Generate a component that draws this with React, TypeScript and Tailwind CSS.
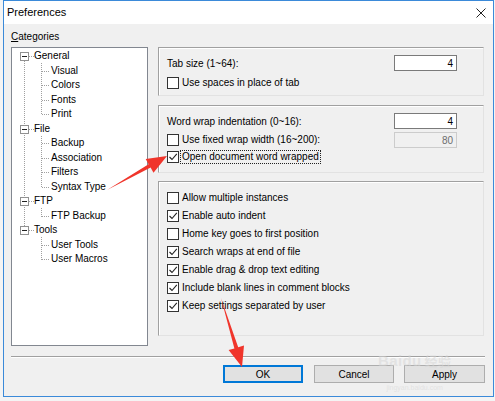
import React from 'react';

type TreeItem = { label: string; level: 0 | 1 };

const treeItems: TreeItem[] = [
  { label: 'General', level: 0 },
  { label: 'Visual', level: 1 },
  { label: 'Colors', level: 1 },
  { label: 'Fonts', level: 1 },
  { label: 'Print', level: 1 },
  { label: 'File', level: 0 },
  { label: 'Backup', level: 1 },
  { label: 'Association', level: 1 },
  { label: 'Filters', level: 1 },
  { label: 'Syntax Type', level: 1 },
  { label: 'FTP', level: 0 },
  { label: 'FTP Backup', level: 1 },
  { label: 'Tools', level: 0 },
  { label: 'User Tools', level: 1 },
  { label: 'User Macros', level: 1 },
];

const ROW = 14.5;
const rowCenter = (i: number) => Math.round(1 + ROW * i + ROW / 2);

// connector lines + expander boxes for the category tree
const TreeLines: React.FC = () => {
  const roots = treeItems.map((t, i) => (t.level === 0 ? i : -1)).filter((i) => i >= 0);
  const groups = roots.map((r, k) => {
    const end = k + 1 < roots.length ? roots[k + 1] : treeItems.length;
    const kids: number[] = [];
    for (let i = r + 1; i < end; i++) kids.push(i);
    return { r, kids };
  });
  return (
    <svg className="absolute left-0 top-0" width={135} height={297} shapeRendering="crispEdges">
      <g stroke="#a0a0a0" strokeDasharray="1 1" strokeWidth={1}>
        <line x1={12.5} y1={rowCenter(roots[0]) + 5} x2={12.5} y2={rowCenter(roots[roots.length - 1]) - 4} />
        {groups.map(({ r, kids }) => (
          <g key={r}>
            <line x1={17} y1={rowCenter(r) + 0.5} x2={22} y2={rowCenter(r) + 0.5} />
            {kids.length > 0 && (
              <line x1={29.5} y1={rowCenter(r) + 7} x2={29.5} y2={rowCenter(kids[kids.length - 1]) + 0.5} />
            )}
            {kids.map((c) => (
              <line key={c} x1={30} y1={rowCenter(c) + 0.5} x2={37} y2={rowCenter(c) + 0.5} />
            ))}
          </g>
        ))}
      </g>
      {roots.map((r) => (
        <g key={r}>
          <rect x={8.5} y={rowCenter(r) - 3.5} width={8} height={8} fill="#fff" stroke="#919191" />
          <rect x={10} y={rowCenter(r)} width={5} height={1} fill="#222" />
        </g>
      ))}
    </svg>
  );
};

const Check: React.FC<{ checked?: boolean }> = ({ checked }) => (
  <span className="w-[12px] h-[12px] border border-[#333] bg-white flex items-center justify-center shrink-0">
    {checked && (
      <svg width="10" height="10" viewBox="0 0 10 10">
        <polyline points="1.5,5 4,7.5 8.8,1.8" fill="none" stroke="#222" strokeWidth="1.1" />
      </svg>
    )}
  </span>
);

const CheckRow: React.FC<{ label: string; checked?: boolean; focused?: boolean; className?: string }> = ({
  label,
  checked,
  focused,
  className = '',
}) => (
  <div className={`flex items-center ${className}`}>
    <Check checked={checked} />
    <span
      className={`ml-[2px] px-[1px] leading-[12px] ${focused ? 'outline outline-1 outline-dotted outline-[#222]' : ''}`}
    >
      {label}
    </span>
  </div>
);

const NumBox: React.FC<{ value: string; disabled?: boolean }> = ({ value, disabled }) => (
  <div
    className={`w-[63px] h-[16px] flex items-center justify-end pr-[3px] ${
      disabled ? 'bg-[#f0f0f0] border border-[#cccccc] text-[#6d6d6d]' : 'bg-white border border-[#7a7a7a] text-black'
    }`}
  >
    {value}
  </div>
);

const GroupBox: React.FC<{ className?: string; children: React.ReactNode }> = ({ className = '', children }) => (
  <div
    className={`border-t border-l border-t-[#a0a0a0] border-l-[#a0a0a0] border-r border-b border-r-[#e2e2e2] border-b-[#e2e2e2] shadow-[inset_1px_1px_0_#ffffff] pl-[8px] pr-[26px] pt-[7px] ${className}`}
  >
    {children}
  </div>
);

const Button: React.FC<{ label: string; primary?: boolean; className?: string }> = ({ label, primary, className = '' }) => (
  <button
    className={`h-[18px] flex items-center justify-center bg-[#e1e1e1] text-black ${
      primary ? 'border-2 border-[#0078d7]' : 'border border-[#adadad]'
    } ${className}`}
  >
    {label}
  </button>
);

const Arrows: React.FC = () => (
  <svg className="absolute left-0 top-0 pointer-events-none" width={495} height={401}>
    <polygon
      points="107,190 150.6,167.6 153.5,172.8 167,156 145.7,158.9 148.6,164.2"
      fill="#f0352b"
    />
    <polygon
      points="221,298 238.2,347.2 244,345.5 242,367 228.6,350.1 234.4,348.4"
      fill="#f0352b"
    />
  </svg>
);

export default function App() {
  return (
    <div className="relative w-[495px] h-[401px] bg-[#f4f4f4] font-['Liberation_Sans',Arial,sans-serif] text-[10px] text-black">
      <div className="ml-[3px] w-[491px] h-[397px] border border-[#3b8ad9] bg-[#f0f0f0] flex flex-col">
        {/* title bar */}
        <div className="h-[23px] bg-white flex items-center justify-between pl-[3px] pr-[7px] shrink-0">
          <span className="text-[11px] leading-none">Preferences</span>
          <svg width="10" height="10" viewBox="0 0 10 10">
            <path d="M0.5 0.5 L9.5 9.5 M9.5 0.5 L0.5 9.5" stroke="#222" strokeWidth="1" />
          </svg>
        </div>

        {/* body */}
        <div className="flex pl-[7px] pr-[8px]">
          <div className="w-[137px] flex flex-col">
            <div className="mt-[6px] h-[14px] leading-[14px] mb-[3px]">
              <span className="underline underline-offset-1">C</span>ategories
            </div>
            <div className="relative h-[299px] border border-[#828790] bg-white">
              <TreeLines />
              <div className="relative pt-[1px]">
                {treeItems.map((t) => (
                  <div
                    key={t.label}
                    className={`h-[14.5px] flex items-center leading-none ${t.level === 0 ? 'pl-[22px]' : 'pl-[39px]'}`}
                  >
                    {t.label}
                  </div>
                ))}
              </div>
            </div>
          </div>

          <div className="ml-[10px] w-[326px] pt-[23px] flex flex-col">
            <GroupBox className="h-[49px]">
              <div className="h-[16px] flex items-center justify-between">
                <span>Tab size (1~64):</span>
                <NumBox value="4" />
              </div>
              <CheckRow label="Use spaces in place of tab" className="mt-[6px]" />
            </GroupBox>

            <GroupBox className="h-[68px] mt-[9px]">
              <div className="h-[16px] flex items-center justify-between">
                <span>Word wrap indentation (0~16):</span>
                <NumBox value="4" />
              </div>
              <div className="h-[16px] mt-[3px] flex items-center justify-between">
                <CheckRow label="Use fixed wrap width (16~200):" />
                <NumBox value="80" disabled />
              </div>
              <CheckRow label="Open document word wrapped" checked focused className="mt-[3px]" />
            </GroupBox>

            <GroupBox className="h-[155px] mt-[8px]">
              {[
                ['Allow multiple instances', false],
                ['Enable auto indent', true],
                ['Home key goes to first position', false],
                ['Search wraps at end of file', true],
                ['Enable drag & drop text editing', true],
                ['Include blank lines in comment blocks', true],
                ['Keep settings separated by user', true],
              ].map(([label, checked]) => (
                <CheckRow key={label as string} label={label as string} checked={checked as boolean} className="h-[18px]" />
              ))}
            </GroupBox>
          </div>
        </div>

        <div className="mt-[10px] ml-[7px] mr-[8px] border-t border-t-[#a0a0a0] border-b border-b-white" />

        <div className="mt-[7px] flex justify-end pr-[8px]">
          <Button label="OK" primary className="w-[80px]" />
          <Button label="Cancel" className="w-[80px] ml-[11px]" />
          <Button label="Apply" className="w-[81px] ml-[10px]" />
        </div>
      </div>

      {/* faint watermark */}
      <div className="absolute left-[378px] top-[353px] flex flex-col items-center pointer-events-none text-[#d4d4d4]/50">
        <span className="text-[15px] font-bold leading-none tracking-wide">
          Baidu<span className="ml-[3px] text-[13px] font-['Noto_Sans_CJK_SC',sans-serif]">经验</span>
        </span>
        <span className="text-[7px] leading-none mt-[16px]">jingyan.baidu.com</span>
      </div>

      <Arrows />
    </div>
  );
}
